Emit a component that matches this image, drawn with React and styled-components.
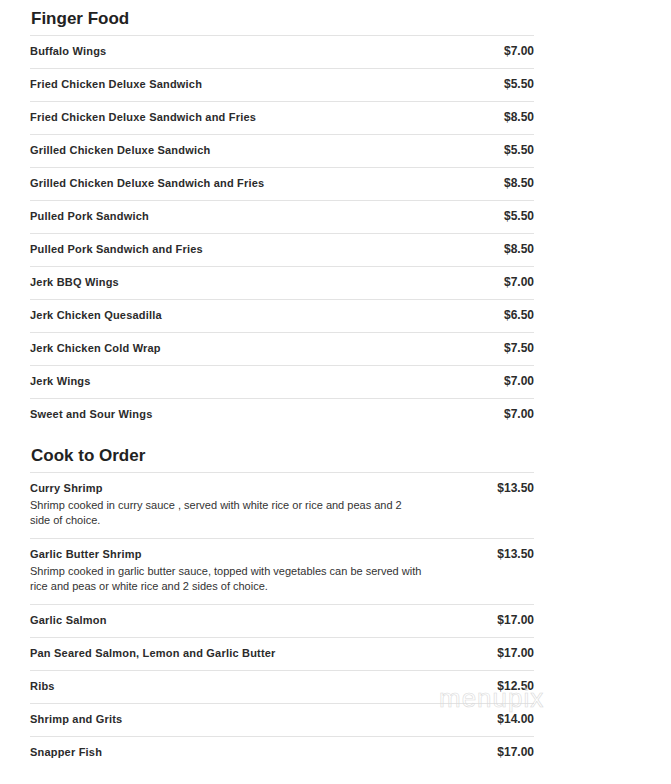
import React from 'react';
import styled, { createGlobalStyle } from 'styled-components';

const GlobalStyle = createGlobalStyle`
    body {
        margin: 0;
        background: #fff;
        font-family: "Liberation Sans", Arial, sans-serif;
        color: #333;
    }
`;

const Page = styled.div`
    position: relative;
    width: 504px;
    padding: 9px 0 0 30px;
`;
const Section = styled.section`
    & + & {
        margin-top: 15px;
    }
`;
const Heading = styled.h2`
    margin: 0 0 6px 1px;
    font-size: 17px;
    line-height: 20px;
    font-weight: bold;
    color: #222;
`;
const Item = styled.div`
    display: flex;
    justify-content: space-between;
    align-items: flex-start;
    padding: 8px 0 10px;
    border-top: 1px solid #e3e3e3;
`;
const Info = styled.div`
    max-width: 394px;
`;
const Name = styled.div`
    font-size: 11px;
    line-height: 14px;
    font-weight: bold;
    letter-spacing: 0.2px;
    color: #2b2b2b;
`;
const Desc = styled.p`
    margin: 3px 0 0;
    font-size: 11px;
    line-height: 15px;
    color: #333;
`;
const Price = styled.div`
    font-size: 12px;
    line-height: 14px;
    font-weight: bold;
    color: #2b2b2b;
`;
const Watermark = styled.div`
    position: absolute;
    left: 439px;
    top: 683px;
    font-size: 26px;
    letter-spacing: 1px;
    color: transparent;
    -webkit-text-stroke: 0.6px #dadada;
    font-family: "Liberation Sans", Arial, sans-serif;
    pointer-events: none;
`;

const menu = [
    {
        title: 'Finger Food',
        items: [
            ['Buffalo Wings', '$7.00'],
            ['Fried Chicken Deluxe Sandwich', '$5.50'],
            ['Fried Chicken Deluxe Sandwich and Fries', '$8.50'],
            ['Grilled Chicken Deluxe Sandwich', '$5.50'],
            ['Grilled Chicken Deluxe Sandwich and Fries', '$8.50'],
            ['Pulled Pork Sandwich', '$5.50'],
            ['Pulled Pork Sandwich and Fries', '$8.50'],
            ['Jerk BBQ Wings', '$7.00'],
            ['Jerk Chicken Quesadilla', '$6.50'],
            ['Jerk Chicken Cold Wrap', '$7.50'],
            ['Jerk Wings', '$7.00'],
            ['Sweet and Sour Wings', '$7.00'],
        ],
    },
    {
        title: 'Cook to Order',
        items: [
            ['Curry Shrimp', '$13.50', 'Shrimp cooked in curry sauce , served with white rice or rice and peas and 2 side of choice.'],
            ['Garlic Butter Shrimp', '$13.50', 'Shrimp cooked in garlic butter sauce, topped with vegetables can be served with rice and peas or white rice and 2 sides of choice.'],
            ['Garlic Salmon', '$17.00'],
            ['Pan Seared Salmon, Lemon and Garlic Butter', '$17.00'],
            ['Ribs', '$12.50'],
            ['Shrimp and Grits', '$14.00'],
            ['Snapper Fish', '$17.00'],
        ],
    },
];

const App = () =>
    <>
        <GlobalStyle />
        <Page>
            {menu.map(section =>
                <Section key={section.title}>
                    <Heading>{section.title}</Heading>
                    {section.items.map(([name, price, desc]) =>
                        <Item key={name}>
                            <Info>
                                <Name>{name}</Name>
                                {desc && <Desc>{desc}</Desc>}
                            </Info>
                            <Price>{price}</Price>
                        </Item>
                    )}
                </Section>
            )}
            <Watermark>menupix</Watermark>
        </Page>
    </>

export default App;
